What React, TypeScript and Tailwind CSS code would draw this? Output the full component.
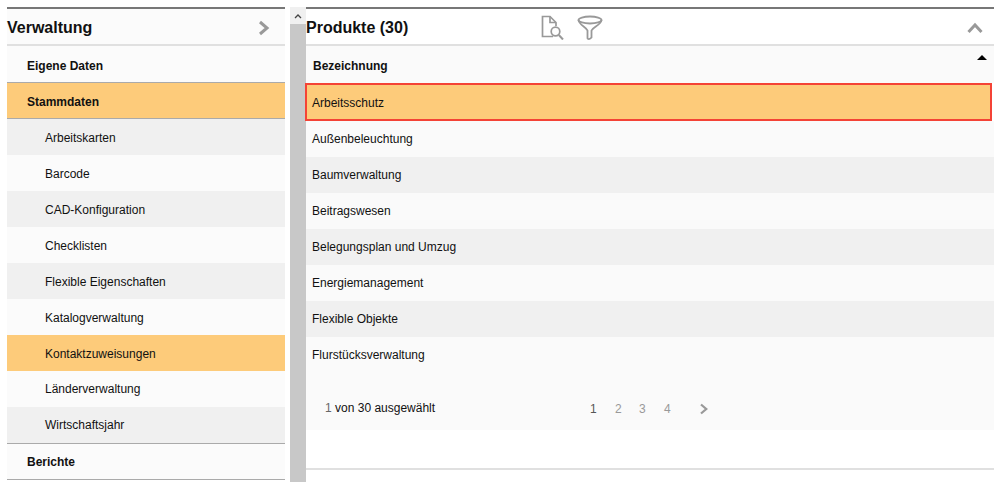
import React from "react";

const F = "font-['Liberation_Sans',Arial,sans-serif]";

function Chevron({ className, d }: { className: string; d: string }) {
  return (
    <svg className={className} viewBox="0 0 16 16" fill="none" stroke="#999999" strokeWidth="3">
      <path d={d} />
    </svg>
  );
}

const subs = ["Arbeitskarten", "Barcode", "CAD-Konfiguration", "Checklisten", "Flexible Eigenschaften", "Katalogverwaltung", "Kontaktzuweisungen", "Länderverwaltung", "Wirtschaftsjahr"];
const rows = ["Außenbeleuchtung", "Baumverwaltung", "Beitragswesen", "Belegungsplan und Umzug", "Energiemanagement", "Flexible Objekte", "Flurstücksverwaltung"];

export default function App() {
  return (
    <div className={`${F} w-[1000px] h-[482px] overflow-hidden bg-white text-[#111111] flex pt-[7px] pl-[7px] pr-[6px] text-[12px]`}>
      <aside className="w-[278px] shrink-0 flex flex-col">
        <div className="h-[39px] shrink-0 pt-[2px] border-t-2 border-b-2 border-t-[#777777] border-b-[#e0e0e0] bg-[#fbfbfb] flex items-center justify-between pr-[13px]">
          <span className="text-[16px] font-bold leading-none">Verwaltung</span>
          <Chevron className="w-[16px] h-[16px]" d="M4 2 L11 8 L4 14" />
        </div>
        <div className="h-[37px] shrink-0 pt-[4px] flex items-center pl-[20px] font-bold bg-[#fbfbfb] border-b border-[#aaaaaa]">Eigene Daten</div>
        <div className="h-[36px] shrink-0 pt-[3px] flex items-center pl-[20px] font-bold bg-[#fdcb7a] border-b border-[#aaaaaa]">Stammdaten</div>
        {subs.map((s, i) => (
          <div key={s} className={`h-[36px] shrink-0 flex items-center pl-[38px] ${i < 7 ? "pt-[2px]" : ""} ${s === "Kontaktzuweisungen" ? "bg-[#fdcb7a]" : i % 2 === 0 ? "bg-[#f0f0f0]" : "bg-[#fbfbfb]"}`}>
            {s}
          </div>
        ))}
        <div className="h-[37px] shrink-0 flex items-center pl-[20px] font-bold bg-[#fbfbfb] border-t border-b border-[#aaaaaa]">Berichte</div>
      </aside>

      <div className="w-[16px] shrink-0 ml-[5px] bg-[#c8c8c8] flex flex-col">
        <div className="h-[17px] bg-[#f0f0f0] flex items-center justify-center">
          <svg className="w-[8px] h-[6px]" viewBox="0 0 8 6" fill="none" stroke="#444444" strokeWidth="1.3">
            <path d="M1 5 L4 2 L7 5" />
          </svg>
        </div>
      </div>

      <main className="flex-1 min-w-0 flex flex-col">
        <div className="h-[39px] shrink-0 pt-[2px] border-t-2 border-b-2 border-t-[#777777] border-b-[#e0e0e0] bg-white flex items-center relative">
          <span className="text-[16px] font-bold leading-none">Produkte (30)</span>
          <div className="ml-[133px] flex items-center gap-[13px]">
            <svg className="w-[23px] h-[25px]" viewBox="0 0 23 25" fill="none" stroke="#999999" strokeWidth="1.7">
              <path d="M12 21.5 H1.5 V1.5 H9 L15 7.5 V11" />
              <path d="M9 1.5 V7.5 H15" />
              <circle cx="14.5" cy="16.5" r="4.3" />
              <path d="M17.8 20 L22 24.5" strokeWidth="2" />
            </svg>
            <svg className="w-[26px] h-[25px]" viewBox="0 0 26 25" fill="none" stroke="#999999" strokeWidth="1.8">
              <ellipse cx="13" cy="5" rx="11.5" ry="3.5" />
              <path d="M1.5 5 C2 10 9.5 12 10.5 15.5 V23 C10.5 24.5 13 24.5 14.5 22.5 V15.5 C16 12 24 10 24.5 5" />
            </svg>
          </div>
          <Chevron className="absolute right-[11px] top-[11px] w-[16px] h-[16px]" d="M1.5 12 L8 5 L14.5 12" />
        </div>

        <div className="h-[37px] shrink-0 pt-[2px] bg-[#fafafa] flex items-center pl-[7px] pr-[7px] justify-between font-bold">
          <span>Bezeichnung</span>
          <svg className="w-[10px] h-[5px] self-start mt-[7px]" viewBox="0 0 10 5" fill="black">
            <path d="M0 5 L5 0 L10 5 Z" />
          </svg>
        </div>

        <div className="-ml-px mr-[2px] h-[38px] shrink-0 pt-[1px] flex items-center pl-[5px] bg-[#fdcb7a] border-2 border-[#f44336]">Arbeitsschutz</div>
        {rows.map((r, i) => (
          <div key={r} className={`h-[36px] shrink-0 flex items-center pl-[6px] ${i % 2 === 0 ? "bg-[#fafafa]" : "bg-[#f0f0f0]"}`}>
            {r}
          </div>
        ))}

        <div className="h-[57px] shrink-0 pt-[14px] bg-[#fafafa] flex items-center text-[12px]">
          <span className="ml-[19px] w-[265px] -mt-[1px]">
            <span className="text-[#666666]">1</span> von 30 ausgewählt
          </span>
          <div className="flex items-center text-[#999999]">
            <span className="w-[25px] text-[#555555]">1</span>
            <span className="w-[24px]">2</span>
            <span className="w-[25px]">3</span>
            <span className="w-[34px]">4</span>
            <Chevron className="w-[12px] h-[12px]" d="M4 2 L11 8 L4 14" />
          </div>
        </div>
        <div className="h-[40px] shrink-0 border-b-2 border-[#e0e0e0]" />
      </main>
    </div>
  );
}
